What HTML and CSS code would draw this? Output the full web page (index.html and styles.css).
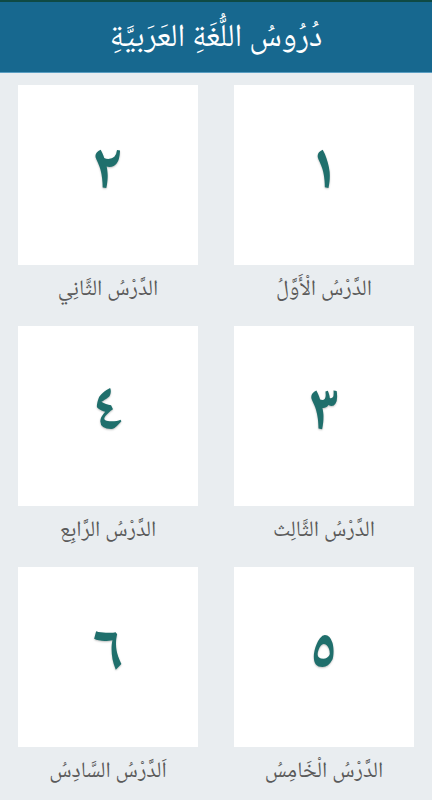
FILE: index.html
```html
<!DOCTYPE html>
<html lang="ar" dir="rtl">
<head>
  <meta charset="UTF-8">
  <title>دروس اللغة العربية</title>
  <link rel="stylesheet" href="styles.css">
</head>
<body>
  <header class="app-bar">
    <h1>دُرُوسُ اللُّغَةِ العَرَبيَّةِ</h1>
  </header>

  <main class="lessons">
    <a class="lesson" href="#">
      <div class="lesson-card"><span class="digit">١</span></div>
      <div class="lesson-name">الدَّرْسُ الْأَوَّلُ</div>
    </a>
    <a class="lesson" href="#">
      <div class="lesson-card"><span class="digit">٢</span></div>
      <div class="lesson-name">الدَّرْسُ الثَّانِي</div>
    </a>
    <a class="lesson" href="#">
      <div class="lesson-card"><span class="digit">٣</span></div>
      <div class="lesson-name">الدَّرْسُ الثَّالِث</div>
    </a>
    <a class="lesson" href="#">
      <div class="lesson-card"><span class="digit">٤</span></div>
      <div class="lesson-name">الدَّرْسُ الرَّابِع</div>
    </a>
    <a class="lesson" href="#">
      <div class="lesson-card"><span class="digit">٥</span></div>
      <div class="lesson-name">الدَّرْسُ الْخَامِسُ</div>
    </a>
    <a class="lesson" href="#">
      <div class="lesson-card"><span class="digit">٦</span></div>
      <div class="lesson-name">اَلدَّرْسُ السَّادِسُ</div>
    </a>
  </main>
</body>
</html>
```

FILE: styles.css
```css
html, body {
  margin: 0;
  padding: 0;
}
body {
  font-family: 'Noto Naskh Arabic', 'Noto Sans Arabic', 'Liberation Serif', serif;
  background-color: #e9edf0;
  color: #555;
  height: 800px;
  overflow: hidden;
}
.app-bar {
  background-color: #17688f;
  border-top: 2px solid #0f4a44;
  height: 72px;
  box-sizing: border-box;
  display: flex;
  align-items: center;
  justify-content: center;
  box-shadow: 0 1px 0 #5a9ec2;
}
.app-bar h1 {
  margin: 0;
  padding-top: 3px;
  color: #fff;
  font-weight: 400;
  font-size: 32px;
  line-height: 1;
}
.lessons {
  display: grid;
  grid-template-columns: 180px 180px;
  column-gap: 36px;
  padding: 13px 18px 0;
}
.lesson {
  display: flex;
  flex-direction: column;
  text-decoration: none;
  height: 241px;
}
.lesson-card {
  background-color: #fff;
  height: 180px;
  display: flex;
  align-items: center;
  justify-content: center;
}
.digit {
  color: #1f6f6c;
  font-size: 64px;
  line-height: 1;
  font-weight: 700;
  text-shadow: 0 1px 2px rgba(0, 0, 0, 0.25);
}
.lesson-name {
  text-align: center;
  color: #5a5a5a;
  font-size: 22px;
  margin-top: 6px;
}
```
